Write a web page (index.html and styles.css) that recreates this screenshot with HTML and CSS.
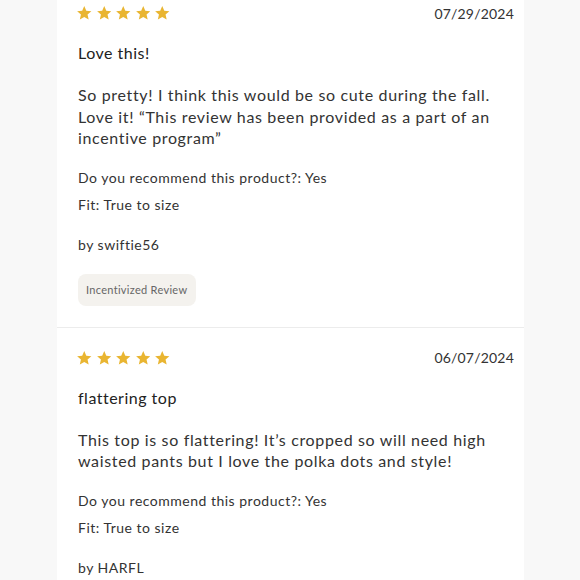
FILE: index.html
```html
<!DOCTYPE html>
<html>
<head>
<meta charset="utf-8">
<link rel="stylesheet" href="styles.css">
</head>
<body>
<div class="page">
  <div class="card">
    <div class="review">
      <div class="head">
        <div class="stars">
          <svg class="star" viewBox="1 1.5 22 21"><path d="M12 1.5l3.1 7.1 7.7.7-5.8 5.1 1.7 7.6L12 18l-6.7 4 1.7-7.6-5.8-5.1 7.7-.7z"/></svg>
          <svg class="star" viewBox="1 1.5 22 21"><path d="M12 1.5l3.1 7.1 7.7.7-5.8 5.1 1.7 7.6L12 18l-6.7 4 1.7-7.6-5.8-5.1 7.7-.7z"/></svg>
          <svg class="star" viewBox="1 1.5 22 21"><path d="M12 1.5l3.1 7.1 7.7.7-5.8 5.1 1.7 7.6L12 18l-6.7 4 1.7-7.6-5.8-5.1 7.7-.7z"/></svg>
          <svg class="star" viewBox="1 1.5 22 21"><path d="M12 1.5l3.1 7.1 7.7.7-5.8 5.1 1.7 7.6L12 18l-6.7 4 1.7-7.6-5.8-5.1 7.7-.7z"/></svg>
          <svg class="star" viewBox="1 1.5 22 21"><path d="M12 1.5l3.1 7.1 7.7.7-5.8 5.1 1.7 7.6L12 18l-6.7 4 1.7-7.6-5.8-5.1 7.7-.7z"/></svg>
        </div>
        <div class="date">07/29/2024</div>
      </div>
      <div class="title">Love this!</div>
      <p class="body">So pretty! I think this would be so cute during the fall. Love it! “This review has been provided as a part of an incentive program”</p>
      <div class="meta">
        <div class="line">Do you recommend this product?: Yes</div>
        <div class="line">Fit: True to size</div>
      </div>
      <div class="author">by swiftie56</div>
      <div class="badge">Incentivized Review</div>
    </div>
    <div class="review">
      <div class="head">
        <div class="stars">
          <svg class="star" viewBox="1 1.5 22 21"><path d="M12 1.5l3.1 7.1 7.7.7-5.8 5.1 1.7 7.6L12 18l-6.7 4 1.7-7.6-5.8-5.1 7.7-.7z"/></svg>
          <svg class="star" viewBox="1 1.5 22 21"><path d="M12 1.5l3.1 7.1 7.7.7-5.8 5.1 1.7 7.6L12 18l-6.7 4 1.7-7.6-5.8-5.1 7.7-.7z"/></svg>
          <svg class="star" viewBox="1 1.5 22 21"><path d="M12 1.5l3.1 7.1 7.7.7-5.8 5.1 1.7 7.6L12 18l-6.7 4 1.7-7.6-5.8-5.1 7.7-.7z"/></svg>
          <svg class="star" viewBox="1 1.5 22 21"><path d="M12 1.5l3.1 7.1 7.7.7-5.8 5.1 1.7 7.6L12 18l-6.7 4 1.7-7.6-5.8-5.1 7.7-.7z"/></svg>
          <svg class="star" viewBox="1 1.5 22 21"><path d="M12 1.5l3.1 7.1 7.7.7-5.8 5.1 1.7 7.6L12 18l-6.7 4 1.7-7.6-5.8-5.1 7.7-.7z"/></svg>
        </div>
        <div class="date">06/07/2024</div>
      </div>
      <div class="title">flattering top</div>
      <p class="body">This top is so flattering! It’s cropped so will need high waisted pants but I love the polka dots and style!</p>
      <div class="meta">
        <div class="line">Do you recommend this product?: Yes</div>
        <div class="line">Fit: True to size</div>
      </div>
      <div class="author">by HARFL</div>
    </div>
  </div>
</div>
</body>
</html>
```

FILE: styles.css
```css
html, body {
  margin: 0;
  padding: 0;
}
body {
  background: #f8f8f8;
  font-family: Lato, "Noto Sans", sans-serif;
  color: #2b2b2b;
  overflow: hidden;
}
.page {
  display: flex;
  justify-content: flex-start;
  padding-left: 57px;
  height: 580px;
  overflow: hidden;
}
.card {
  width: 467px;
  background: #ffffff;
  margin-top: -17px;
}
.review {
  padding: 20px 10px 21px 20px;
  border-bottom: 1px solid #ececec;
  display: flex;
  flex-direction: column;
}
.head {
  display: flex;
  justify-content: space-between;
  align-items: center;
  height: 20px;
}
.stars {
  display: flex;
  gap: 5px;
}
.star {
  width: 14.5px;
  height: 14px;
  fill: #e9b531;
}
.date {
  font-size: 14px;
  letter-spacing: 0.2px;
  color: #333;
}
.title, .body, .meta, .author {
  padding-left: 1px;
}
.title {
  margin-top: 19px;
  font-size: 16px;
  line-height: 22px;
  letter-spacing: 0.5px;
  color: #222;
}
.body {
  margin: 20px 0 0;
  font-size: 16px;
  line-height: 21.5px;
  letter-spacing: 0.65px;
  color: #333;
}
.meta {
  margin-top: 19px;
  display: flex;
  flex-direction: column;
  gap: 7px;
}
.line, .author {
  font-size: 14px;
  line-height: 20px;
  letter-spacing: 0.5px;
  color: #333;
}
.author {
  margin-top: 20px;
}
.badge {
  align-self: flex-start;
  margin-top: 19px;
  margin-left: 1px;
  background: #f4f2ee;
  border-radius: 8px;
  height: 32px;
  padding: 0 9px 0 8px;
  display: flex;
  align-items: center;
  font-size: 11px;
  letter-spacing: 0.3px;
  color: #666;
}
```
